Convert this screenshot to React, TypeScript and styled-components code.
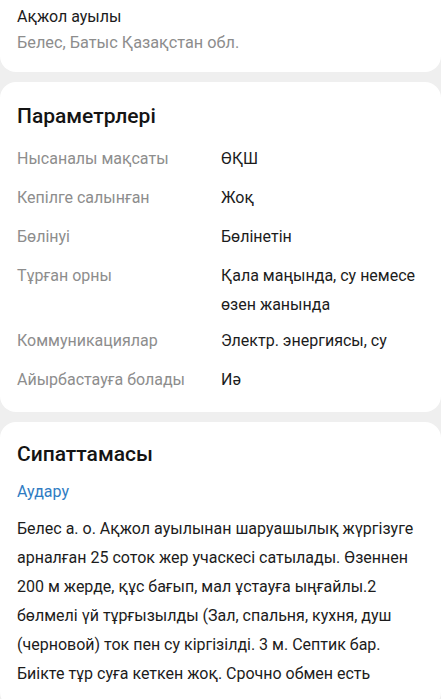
import React from "react";
import styled, { createGlobalStyle } from "styled-components";

const GlobalStyle = createGlobalStyle`
  html, body {
    margin: 0;
    padding: 0;
    background: #efefef;
  }
  body {
    font-family: Roboto, "Noto Sans", "Liberation Sans", sans-serif;
    -webkit-font-smoothing: antialiased;
  }
`;

const Page = styled.div`
  display: flex;
  flex-direction: column;
  gap: 10px;
  width: 441px;
  height: 699px;
  overflow: hidden;
  background: #efefef;
`;

const Card = styled.section<{ $top?: number; $bottom?: number; $first?: boolean }>`
  background: #ffffff;
  border-radius: ${(p) => (p.$first ? "0 0 16px 16px" : "16px")};
  padding: ${(p) => p.$top ?? 20}px 17px ${(p) => p.$bottom ?? 17}px;
  flex-shrink: 0;
`;

const PlaceTitle = styled.div`
  font-size: 16px;
  line-height: 26px;
  color: #1c1c1c;
`;

const PlaceSub = styled.div`
  font-size: 16.3px;
  line-height: 26px;
  color: #8d8d8d;
`;

const Heading = styled.h2<{ $gap: number }>`
  margin: 0 0 ${(p) => p.$gap}px;
  font-size: 21px;
  line-height: 28px;
  font-weight: 500;
  color: #141414;
`;

const ParamList = styled.div`
  display: flex;
  flex-direction: column;
  gap: 10px;
`;

const ParamRow = styled.div<{ $tight?: boolean }>`
  display: grid;
  grid-template-columns: 204px 1fr;
  font-size: 16px;
  line-height: 29px;
  margin-bottom: ${(p) => (p.$tight ? -3 : 0)}px;
`;

const ParamLabel = styled.div`
  color: #8d8d8d;
`;

const ParamValue = styled.div`
  color: #1c1c1c;
`;

const TranslateLink = styled.a`
  display: block;
  font-size: 16px;
  line-height: 26px;
  color: #2f7cc3;
  text-decoration: none;
  margin-bottom: 9px;
`;

const Body = styled.p`
  margin: 0;
  font-size: 16px;
  line-height: 29px;
  color: #1c1c1c;
  white-space: nowrap;
`;

const params: { label: string; value: React.ReactNode; multi?: boolean }[] = [
  { label: "Нысаналы мақсаты", value: "ӨҚШ" },
  { label: "Кепілге салынған", value: "Жоқ" },
  { label: "Бөлінуі", value: "Бөлінетін" },
  {
    label: "Тұрған орны",
    multi: true,
    value: (
      <>
        Қала маңында, су немесе
        <br />
        өзен жанында
      </>
    ),
  },
  { label: "Коммуникациялар", value: "Электр. энергиясы, су" },
  { label: "Айырбастауға болады", value: "Иә" },
];

const bodyLines = [
  "Белес а. о. Ақжол ауылынан шаруашылық жүргізуге",
  "арналған 25 соток жер учаскесі сатылады. Өзеннен",
  "200 м жерде, құс бағып, мал ұстауға ыңғайлы.2",
  "бөлмелі үй тұрғызылды (Зал, спальня, кухня, душ",
  "(черновой) ток пен су кіргізілді. 3 м. Септик бар.",
  "Биікте тұр суға кеткен жоқ. Срочно обмен есть",
];

export default function App() {
  return (
    <>
      <GlobalStyle />
      <Page>
        <Card $first $top={4} $bottom={16}>
          <PlaceTitle>Ақжол ауылы</PlaceTitle>
          <PlaceSub>Белес, Батыс Қазақстан обл.</PlaceSub>
        </Card>
        <Card $top={20} $bottom={18}>
          <Heading $gap={14}>Параметрлері</Heading>
          <ParamList>
            {params.map((p) => (
              <ParamRow key={p.label} $tight={p.multi}>
                <ParamLabel>{p.label}</ParamLabel>
                <ParamValue>{p.value}</ParamValue>
              </ParamRow>
            ))}
          </ParamList>
        </Card>
        <Card $top={18} $bottom={20}>
          <Heading $gap={11}>Сипаттамасы</Heading>
          <TranslateLink href="#">Аудару</TranslateLink>
          <Body>
            {bodyLines.map((l, i) => (
              <React.Fragment key={i}>
                {l}
                {i < bodyLines.length - 1 && <br />}
              </React.Fragment>
            ))}
          </Body>
        </Card>
      </Page>
    </>
  );
}
